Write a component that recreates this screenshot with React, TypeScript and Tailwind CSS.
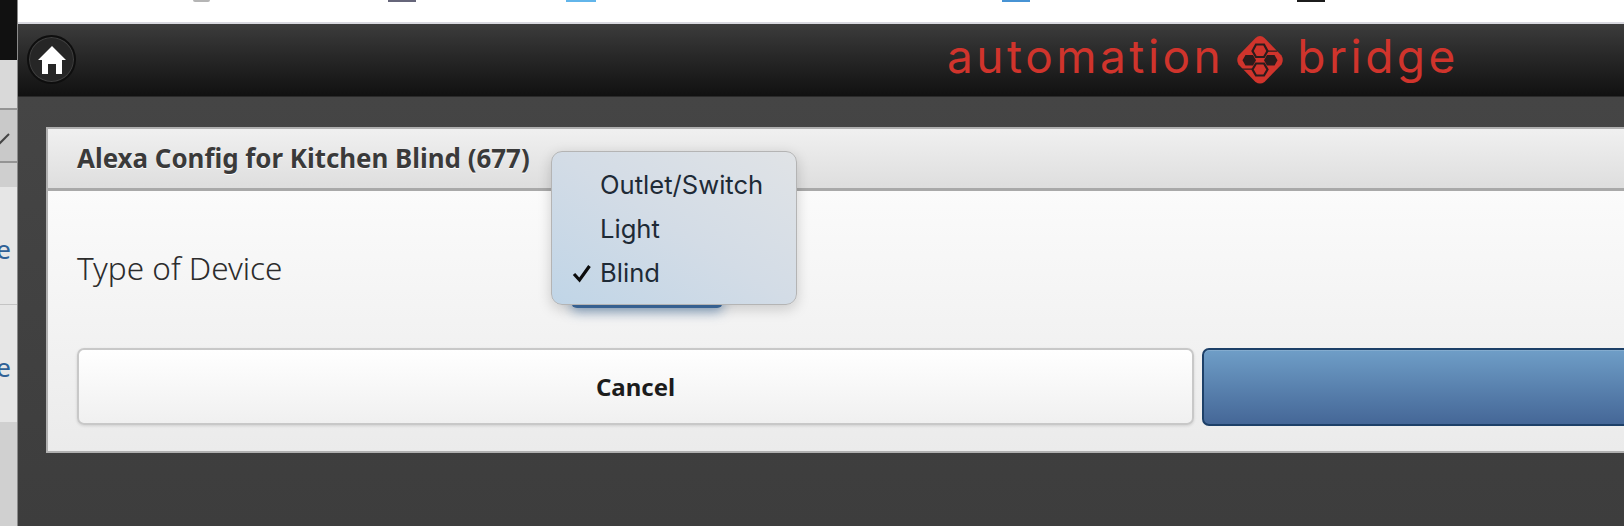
const textFont = "font-['Noto_Sans','Liberation_Sans',sans-serif]";

function HomeIcon() {
  return (
    <svg width="28" height="28" viewBox="0 0 28 28" fill="#fff">
      <path d="M14 0 L28 14 L24 14 L24 28 L18 28 L18 18 L10 18 L10 28 L4 28 L4 14 L0 14 Z" />
    </svg>
  );
}

// red diamond with the hexagons cut out of it
function BridgeMark() {
  return (
    <svg width="48" height="48" viewBox="0 0 48 48">
      <path d="M24 0 Q26.500 0 28.500 2 L45.500 19.500 Q48 24 45.500 28.500 L28.500 46 Q24 49 19.500 46 L2.500 28.500 Q0 24 2.500 19.500 L19.500 2 Q21.500 0 24 0 Z" fill="#d0342c" />
      <g fill="none" stroke="#2a1c1c" strokeWidth="2.200">
        <path d="M16.500 15 L20 8.500 L28 8.500 L31.500 15 L28 21 L20 21 Z" />
        <path d="M16.500 33.500 L20 27.500 L28 27.500 L31.500 33.500 L28 39.500 L20 39.500 Z" />
      </g>
      <g fill="#2a1c1c">
        <path d="M6.500 24.300 L9.500 19 L17 19 L20 24.300 L17 29.500 L9.500 29.500 Z" />
        <path d="M28 24.300 L31 19 L38.500 19 L41.500 24.300 L38.500 29.500 L31 29.500 Z" />
        <path d="M6 32.500 L16 32.500 L16 33.700 L7 33.700 Z M32 14.500 L42 14.500 L41 15.700 L32 15.700 Z" />
      </g>
    </svg>
  );
}

function LeftStrip() {
  return (
    <div className="w-[18px] shrink-0 flex flex-col border-r border-[#8a8a8a] overflow-hidden">
      <div className="h-[60px] bg-[#111111]" />
      <div className="h-[50px] bg-[#d9d9d9] border-b-2 border-[#949494]" />
      <div className="relative h-[53px] bg-[#c9c9c9] border-b-2 border-[#949494]">
        <svg width="12" height="16" viewBox="0 0 12 16" className="absolute left-0 top-[21px]">
          <path d="M-2 14 L9 3" stroke="#444" strokeWidth="2" fill="none" />
        </svg>
      </div>
      <div className="h-[24px] bg-[#cfcfcf]" />
      <div className="h-[118px] bg-[#e6e6e6] border-b border-[#c4c4c4] flex items-center justify-end pt-[8px] text-[26px] text-[#2f6196]">
        <span className={`${textFont} mr-[6px] w-0 flex justify-end`}>e</span>
      </div>
      <div className="h-[117px] bg-[#e6e6e6] flex items-center justify-end pt-[8px] text-[26px] text-[#2f6196]">
        <span className={`${textFont} mr-[6px] w-0 flex justify-end`}>e</span>
      </div>
      <div className="flex-1 bg-[#d0d0d0]" />
    </div>
  );
}

function DeviceMenu() {
  return (
    <div className="absolute left-[551px] top-[151px] w-[246px] h-[154px] rounded-[11px] border border-[#b4b4b4] bg-gradient-to-tr from-[#c0d5e7] via-[#d3dce6] to-[#e0e3e6] shadow-[0_4px_14px_rgba(0,0,0,0.18)] py-[11px] leading-[44px] text-[#1e2a36]">
      {["Outlet/Switch", "Light", "Blind"].map((option) => (
        <div key={option} className="relative pl-[48px] font-['Inter',sans-serif] text-[25.600px] h-[44px]">
          {option === "Blind" && (
            <svg width="20" height="20" viewBox="0 0 20 20" className="absolute left-[20px] top-[12px]">
              <path d="M2 11 L7.500 17 L17.500 3" stroke="#0c0c0c" strokeWidth="3.200" fill="none" />
            </svg>
          )}
          {option}
        </div>
      ))}
    </div>
  );
}

export default function App() {
  return (
    <div className="relative flex w-[1624px] h-[526px] overflow-hidden bg-[#3e3e3e]">
      <LeftStrip />
      <div className="flex-1 min-w-0 flex flex-col">
        <div className="relative h-[22px] bg-white">
          <div className="absolute left-[175px] top-0 w-[17px] h-[2px] rounded-b-full bg-[#b5b5b5]" />
          <div className="absolute left-[370px] top-0 w-[28px] h-[2px] bg-[#66667a]" />
          <div className="absolute left-[548px] top-0 w-[30px] h-[2px] bg-[#62b5ea]" />
          <div className="absolute left-[984px] top-0 w-[28px] h-[2px] bg-[#4793d4]" />
          <div className="absolute left-[1279px] top-0 w-[28px] h-[2px] bg-[#1c1c1c]" />
        </div>
        <header className="h-[75px] border-t-2 border-[#d8d8df] border-b border-b-[#2a2a2a] bg-gradient-to-b from-[#3c3c3c] to-[#111111] flex items-center pl-[9px]">
          <div className="w-[49px] h-[49px] rounded-full bg-[#262626] border-2 border-[#0e0e0e] shadow-[inset_0_0_0_1px_#3f3f3f] flex items-center justify-center mt-[-1px]">
            <HomeIcon />
          </div>
          <div className="ml-[871px] flex items-center text-[#d0342c] font-['Inter',sans-serif] font-normal text-[46px] leading-none mt-[-8px]">
            <span className="tracking-[3.500px]">automation</span>
            <span className="ml-[12px] mr-[13px] mt-[8px]"><BridgeMark /></span>
            <span className="tracking-[3.500px]">bridge</span>
          </div>
        </header>
        <main className="flex-1 min-h-0 bg-gradient-to-b from-[#454545] to-[#3d3d3d] pl-[28px] pt-[30px]">
          <section className="w-[1600px] h-[326px] border-2 border-[#b0b0b0] border-r-0 flex flex-col">
            <div className="h-[62px] bg-gradient-to-b from-[#f0f0f0] to-[#dedede] border-b-[3px] border-[#a9a9a9] pl-[29px] flex items-center">
              <h1 className={`${textFont} text-[25.900px] font-bold text-[#3a3a3a] [text-shadow:0_1px_0_#fff]`}>
                Alexa Config for Kitchen Blind (677)
              </h1>
            </div>
            <div className="flex-1 bg-gradient-to-b from-[#fbfbfb] to-[#ebebeb] pl-[29px] flex flex-col">
              <div className={`${textFont} mt-[57px] h-[40px] flex items-center text-[31.500px] font-light text-[#2c2c2c]`}>
                Type of Device
              </div>
              <div className="mt-[60px] flex gap-[8px]">
                <button className={`${textFont} w-[1117px] h-[77px] rounded-[7px] border-2 border-[#c8c8c8] bg-gradient-to-b from-white to-[#f0f0f0] shadow-[0_1px_3px_rgba(0,0,0,0.12)] text-[24px] font-bold text-[#1c1c1c]`}>
                  Cancel
                </button>
                <button className="flex-1 h-[78px] rounded-l-[7px] border-2 border-[#1d4068] bg-gradient-to-b from-[#6f9ec7] to-[#456797] shadow-[inset_0_1px_0_rgba(255,255,255,0.15)]" />
              </div>
            </div>
          </section>
        </main>
      </div>
      <div className="absolute left-[571px] top-[288px] w-[152px] h-[20px] rounded-b-[6px] bg-[#3d6da3] shadow-[0_4px_12px_rgba(61,109,163,0.55)]" />
      <DeviceMenu />
    </div>
  );
}
